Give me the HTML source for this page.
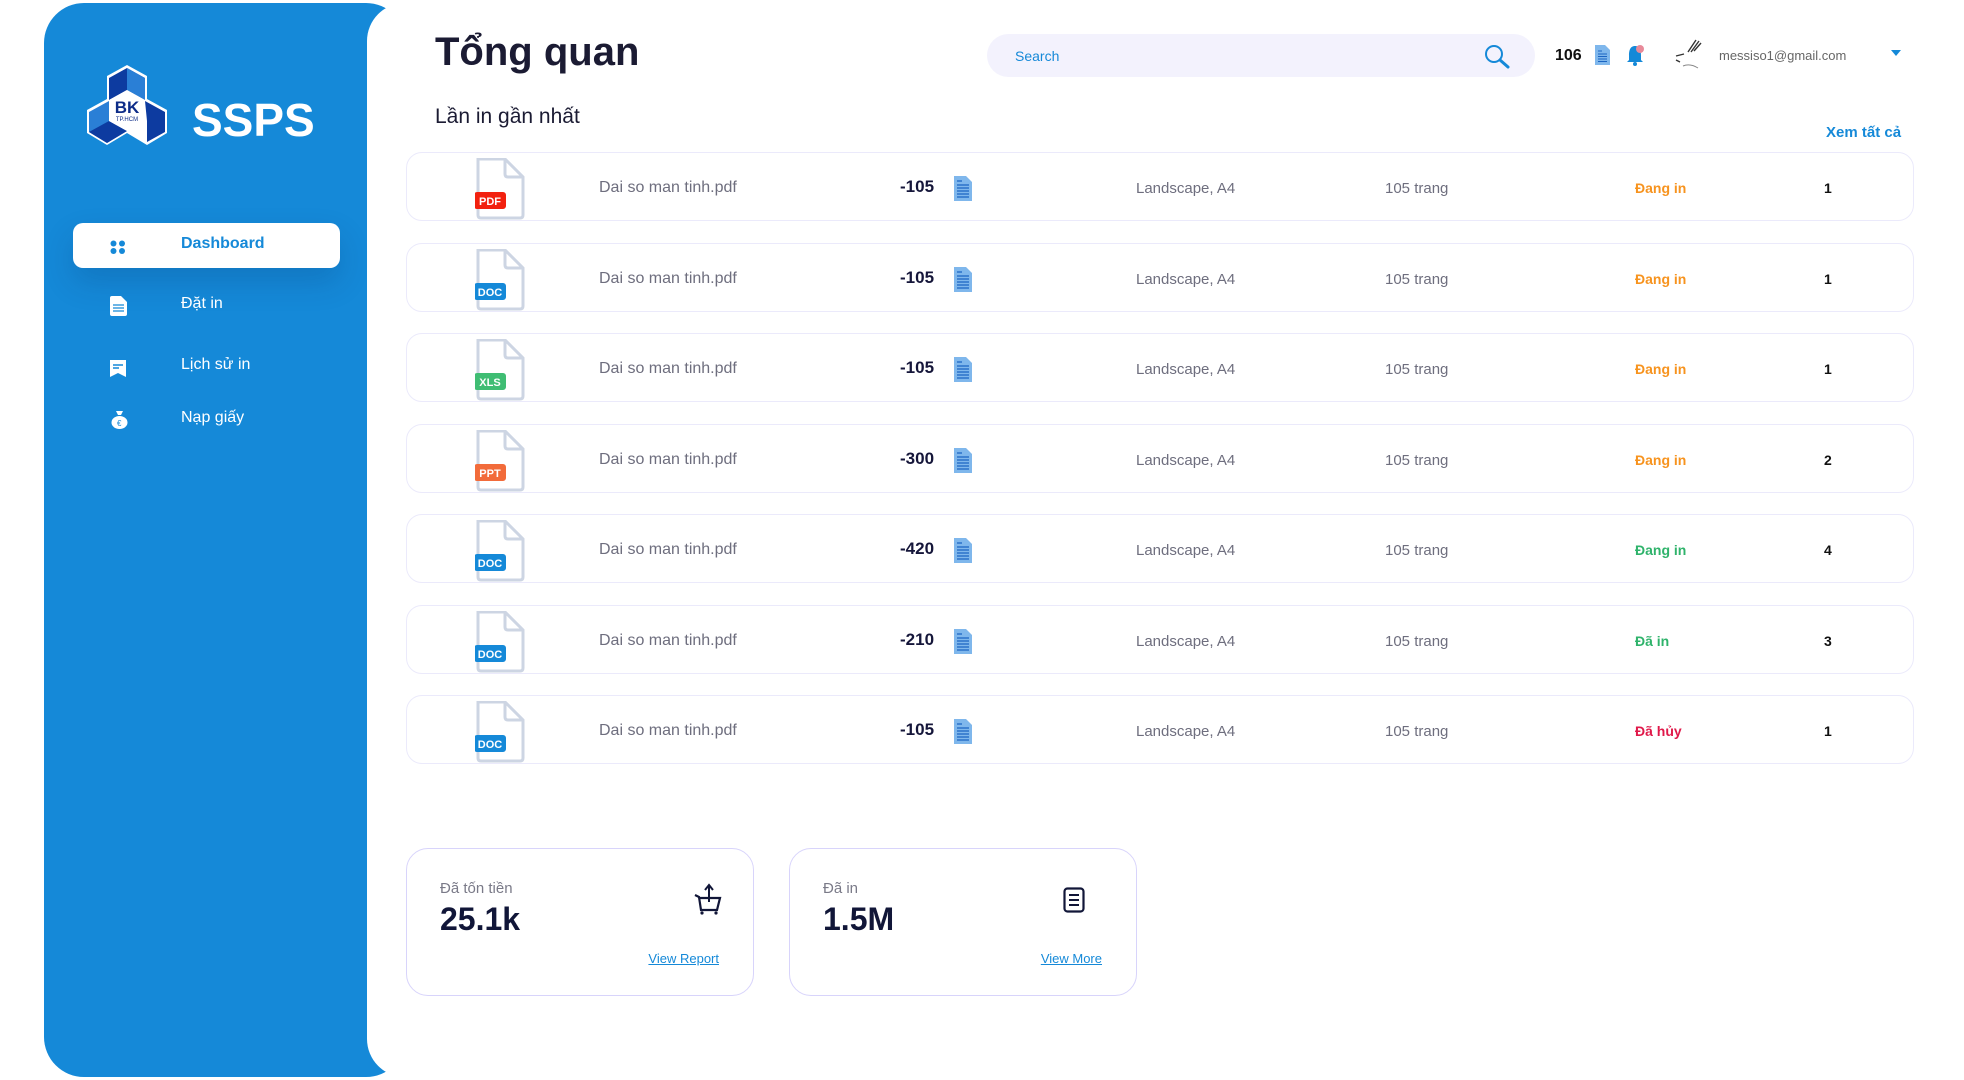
<!DOCTYPE html>
<html><head><meta charset="utf-8"><style>
*{margin:0;padding:0;box-sizing:border-box}
body{width:1964px;height:1080px;background:#fff;font-family:"Liberation Sans",sans-serif;position:relative;overflow:hidden}
.side{position:absolute;left:44px;top:3px;width:362px;height:1074px;background:#1589d8;border-radius:40px}
.main{position:absolute;left:367px;top:3px;width:1620px;height:1074px;background:#fff;border-radius:38px 0 0 38px}
.abs{position:absolute}
.nav{position:absolute;left:181px;color:#fff;font-size:16px}
.row{position:absolute;left:406px;width:1508px;height:69px;border:1.5px solid #ebeafb;border-radius:16px;background:#fff}
.row .t{position:absolute;top:26px;font-size:16px;color:#6e6e7e}
.row .t2{position:absolute;top:27px;font-size:15px;color:#6e6e7e}
.row .amt{position:absolute;left:493px;top:24px;font-size:17px;font-weight:bold;color:#15163a}
.row .st{position:absolute;left:1228px;top:27px;font-size:14px;font-weight:bold}
.row .n{position:absolute;left:1417px;top:27px;font-size:14px;font-weight:bold;color:#111}
.fi{position:absolute;left:68px;top:5px}
.di{position:absolute;left:547px;top:23px}
.card{position:absolute;top:848px;width:348px;height:148px;border:1.5px solid #d8d4fb;border-radius:22px}
.card .l{position:absolute;left:33px;top:31px;font-size:15px;color:#7a7a88}
.card .v{position:absolute;left:33px;top:52px;font-size:32px;font-weight:bold;color:#111638}
.card a{position:absolute;top:102px;font-size:13px;color:#1589d8;text-decoration:underline}
</style></head><body>
<div class="side"></div>
<div class="main"></div>

<svg class="abs" style="left:84px;top:63px" width="86" height="86" viewBox="0 0 86 86">
<polygon points="43,2 63,13 63,36 83,47 83,70 63,82 43,70 23,82 3,70 3,47 23,36 23,13" fill="#fff"/>
<polygon points="43,5 61,15 61,37 43,27 25,37 25,15" fill="#0d3ba0"/>
<polygon points="43,5 61,15 61,37 43,27" fill="#2a7fd6"/>
<polygon points="61,38 81,49 81,69 63,79 63,58" fill="#0d3ba0"/>
<polygon points="5,49 25,38 25,58 43,68 23,80 5,69" fill="#2a7fd6"/>
<polygon points="25,58 43,68 23,80 5,69" fill="#0d3ba0"/>
<polygon points="43,27 61,37 61,58 43,68 25,58 25,37" fill="#fff"/>
<text x="43" y="50" text-anchor="middle" font-family="Liberation Sans" font-weight="bold" font-size="17" fill="#0d2c88">BK</text>
<text x="43" y="58" text-anchor="middle" font-family="Liberation Sans" font-size="6" fill="#0d2c88">TP.HCM</text>
</svg>
<div class="abs" style="left:192px;top:93px;font-size:46px;font-weight:bold;color:#fff">SSPS</div>

<div class="abs" style="left:73px;top:223px;width:267px;height:45px;background:#fff;border-radius:10px;box-shadow:0 14px 30px rgba(0,40,90,.18)"></div>
<svg class="abs" style="left:110px;top:240px" width="16" height="14"><circle cx="3.5" cy="3.5" r="3" fill="#1589d8"/><circle cx="12" cy="3.5" r="3" fill="#1589d8"/><circle cx="3.5" cy="11" r="3" fill="#1589d8"/><circle cx="12" cy="11" r="3" fill="#1589d8"/></svg>
<div class="nav" style="top:235px;color:#1589d8;font-weight:bold">Dashboard</div>
<svg class="abs" style="left:110px;top:296px" width="17" height="20"><path d="M0 2Q0 0 2 0H11L17 6V18Q17 20 15 20H2Q0 20 0 18Z" fill="#fff"/><path d="M3 9H14M3 12H14M3 15H14" stroke="#1589d8" stroke-width="1.3"/></svg>
<div class="nav" style="top:295px">Đặt in</div>
<svg class="abs" style="left:110px;top:360px" width="16" height="17"><path d="M0 0H16V17L8 13L0 17Z" fill="#fff"/><path d="M3 5H13M3 8H9" stroke="#1589d8" stroke-width="1.5"/></svg>
<div class="nav" style="top:356px">Lịch sử in</div>
<svg class="abs" style="left:111px;top:410px" width="17" height="19"><path d="M5 1H12L10 5H7Z" fill="#fff"/><ellipse cx="8.5" cy="12.5" rx="8" ry="6.5" fill="#fff"/><text x="6" y="16" font-size="8" fill="#1589d8" font-family="Liberation Sans">€</text></svg>
<div class="nav" style="top:409px">Nạp giấy</div>

<div class="abs" style="left:435px;top:30px;font-size:40px;font-weight:bold;color:#1b1b33">Tổng quan</div>
<div class="abs" style="left:435px;top:105px;font-size:21px;color:#1b1b33">Lần in gần nhất</div>
<div class="abs" style="left:987px;top:34px;width:548px;height:43px;background:#f3f2fd;border-radius:22px"></div>
<div class="abs" style="left:1015px;top:48px;font-size:14px;color:#1589d8">Search</div>
<svg class="abs" style="left:1484px;top:44px" width="26" height="25"><circle cx="10" cy="10" r="8" fill="none" stroke="#1589d8" stroke-width="2"/><path d="M16 16L24 23" stroke="#1589d8" stroke-width="3" stroke-linecap="round"/></svg>
<div class="abs" style="left:1555px;top:47px;font-size:16px;font-weight:bold;color:#111">106</div>
<svg class="abs" style="left:1595px;top:45px" width="15" height="20"><path d="M0 0H10L15 5V20H0Z" fill="#7fb7ec"/><path d="M3 6H7M3 9H12M3 11.5H12M3 14H12M3 16.5H12" stroke="#1b64c2" stroke-width="1"/></svg>
<svg class="abs" style="left:1625px;top:44px" width="20" height="22"><path d="M10 2C5 2 4 7 4 11V16L2 18H18L16 16V11C16 7 15 2 10 2Z" fill="#1589d8"/><circle cx="10" cy="20" r="2" fill="#1589d8"/><circle cx="15" cy="5" r="4" fill="#e88a9a"/></svg>
<svg class="abs" style="left:1668px;top:38px" width="40" height="34"><path d="M20 14L28 2M23 14L31 3M26 13L33 5M8 18L16 16M8 22L12 24" stroke="#333" stroke-width="1.4"/><path d="M15 28Q22 25 30 30" stroke="#888" fill="none"/></svg>
<div class="abs" style="left:1719px;top:48px;font-size:13px;color:#666">messiso1@gmail.com</div>
<div class="abs" style="left:1891px;top:50px;width:0;height:0;border-left:5px solid transparent;border-right:5px solid transparent;border-top:6px solid #1589d8"></div>
<div class="abs" style="left:1826px;top:124px;font-size:15px;font-weight:bold;color:#1589d8">Xem tất cả</div>

<svg width="0" height="0" style="position:absolute"><defs>
<g id="page"><path d="M3 1H30L48 19V57Q48 60 45 60H6Q3 60 3 57Z" fill="none" stroke="#cdd5e3" stroke-width="3"/><path d="M30 1V16Q30 19 33 19H48" fill="none" stroke="#cdd5e3" stroke-width="3"/></g>
<g id="doc"><path d="M0 0H12L18 6V25H0Z" fill="#7fb7ec"/><path d="M3 5H8M3 9H15M3 12H15M3 15H15M3 18H15M3 21H15" stroke="#1b64c2" stroke-width="1.2"/></g>
</defs></svg>

<div class="row" style="top:152px">
<svg class="fi" width="54" height="62"><use href="#page"/><rect x="-1" y="34" width="32" height="17" rx="3" fill="#f2210f"/><text x="15" y="47" text-anchor="middle" font-size="11" font-weight="bold" fill="#fff" font-family="Liberation Sans">PDF</text></svg>
<div class="t" style="left:192px">Dai so man tinh.pdf</div><div class="amt">-105</div><svg class="di" width="18" height="25"><use href="#doc"/></svg>
<div class="t2" style="left:729px">Landscape, A4</div><div class="t2" style="left:978px">105 trang</div><div class="st" style="color:#f7931e">Đang in</div><div class="n">1</div></div>

<div class="row" style="top:243px">
<svg class="fi" width="54" height="62"><use href="#page"/><rect x="-1" y="34" width="32" height="17" rx="3" fill="#1589d8"/><text x="15" y="47" text-anchor="middle" font-size="11" font-weight="bold" fill="#fff" font-family="Liberation Sans">DOC</text></svg>
<div class="t" style="left:192px">Dai so man tinh.pdf</div><div class="amt">-105</div><svg class="di" width="18" height="25"><use href="#doc"/></svg>
<div class="t2" style="left:729px">Landscape, A4</div><div class="t2" style="left:978px">105 trang</div><div class="st" style="color:#f7931e">Đang in</div><div class="n">1</div></div>

<div class="row" style="top:333px">
<svg class="fi" width="54" height="62"><use href="#page"/><rect x="-1" y="34" width="32" height="17" rx="3" fill="#3fbd73"/><text x="15" y="47" text-anchor="middle" font-size="11" font-weight="bold" fill="#fff" font-family="Liberation Sans">XLS</text></svg>
<div class="t" style="left:192px">Dai so man tinh.pdf</div><div class="amt">-105</div><svg class="di" width="18" height="25"><use href="#doc"/></svg>
<div class="t2" style="left:729px">Landscape, A4</div><div class="t2" style="left:978px">105 trang</div><div class="st" style="color:#f7931e">Đang in</div><div class="n">1</div></div>

<div class="row" style="top:424px">
<svg class="fi" width="54" height="62"><use href="#page"/><rect x="-1" y="34" width="32" height="17" rx="3" fill="#f26b3a"/><text x="15" y="47" text-anchor="middle" font-size="11" font-weight="bold" fill="#fff" font-family="Liberation Sans">PPT</text></svg>
<div class="t" style="left:192px">Dai so man tinh.pdf</div><div class="amt">-300</div><svg class="di" width="18" height="25"><use href="#doc"/></svg>
<div class="t2" style="left:729px">Landscape, A4</div><div class="t2" style="left:978px">105 trang</div><div class="st" style="color:#f7931e">Đang in</div><div class="n">2</div></div>

<div class="row" style="top:514px">
<svg class="fi" width="54" height="62"><use href="#page"/><rect x="-1" y="34" width="32" height="17" rx="3" fill="#1589d8"/><text x="15" y="47" text-anchor="middle" font-size="11" font-weight="bold" fill="#fff" font-family="Liberation Sans">DOC</text></svg>
<div class="t" style="left:192px">Dai so man tinh.pdf</div><div class="amt">-420</div><svg class="di" width="18" height="25"><use href="#doc"/></svg>
<div class="t2" style="left:729px">Landscape, A4</div><div class="t2" style="left:978px">105 trang</div><div class="st" style="color:#2fb36b">Đang in</div><div class="n">4</div></div>

<div class="row" style="top:605px">
<svg class="fi" width="54" height="62"><use href="#page"/><rect x="-1" y="34" width="32" height="17" rx="3" fill="#1589d8"/><text x="15" y="47" text-anchor="middle" font-size="11" font-weight="bold" fill="#fff" font-family="Liberation Sans">DOC</text></svg>
<div class="t" style="left:192px">Dai so man tinh.pdf</div><div class="amt">-210</div><svg class="di" width="18" height="25"><use href="#doc"/></svg>
<div class="t2" style="left:729px">Landscape, A4</div><div class="t2" style="left:978px">105 trang</div><div class="st" style="color:#2fb36b">Đã in</div><div class="n">3</div></div>

<div class="row" style="top:695px">
<svg class="fi" width="54" height="62"><use href="#page"/><rect x="-1" y="34" width="32" height="17" rx="3" fill="#1589d8"/><text x="15" y="47" text-anchor="middle" font-size="11" font-weight="bold" fill="#fff" font-family="Liberation Sans">DOC</text></svg>
<div class="t" style="left:192px">Dai so man tinh.pdf</div><div class="amt">-105</div><svg class="di" width="18" height="25"><use href="#doc"/></svg>
<div class="t2" style="left:729px">Landscape, A4</div><div class="t2" style="left:978px">105 trang</div><div class="st" style="color:#e0194a">Đã hủy</div><div class="n">1</div></div>

<div class="card" style="left:406px">
<div class="l">Đã tốn tiền</div><div class="v">25.1k</div>
<svg class="abs" style="left:286px;top:34px" width="30" height="32"><path d="M2 12L6 14L8 27H24L27 15H7" fill="none" stroke="#111638" stroke-width="2.2"/><circle cx="9" cy="30" r="1.6" fill="#111638"/><circle cx="23" cy="30" r="1.6" fill="#111638"/><path d="M16 19V3M12 7L16 2L20 7" fill="none" stroke="#111638" stroke-width="2"/></svg>
<a style="right:34px">View Report</a></div>
<div class="card" style="left:789px">
<div class="l">Đã in</div><div class="v">1.5M</div>
<svg class="abs" style="left:273px;top:38px" width="22" height="26"><rect x="1.5" y="1.5" width="19" height="23" rx="3" fill="none" stroke="#111638" stroke-width="2.2"/><path d="M6 8H16M6 13H16M6 18H16" stroke="#111638" stroke-width="2"/></svg>
<a style="right:34px">View More</a></div>
</body></html>
